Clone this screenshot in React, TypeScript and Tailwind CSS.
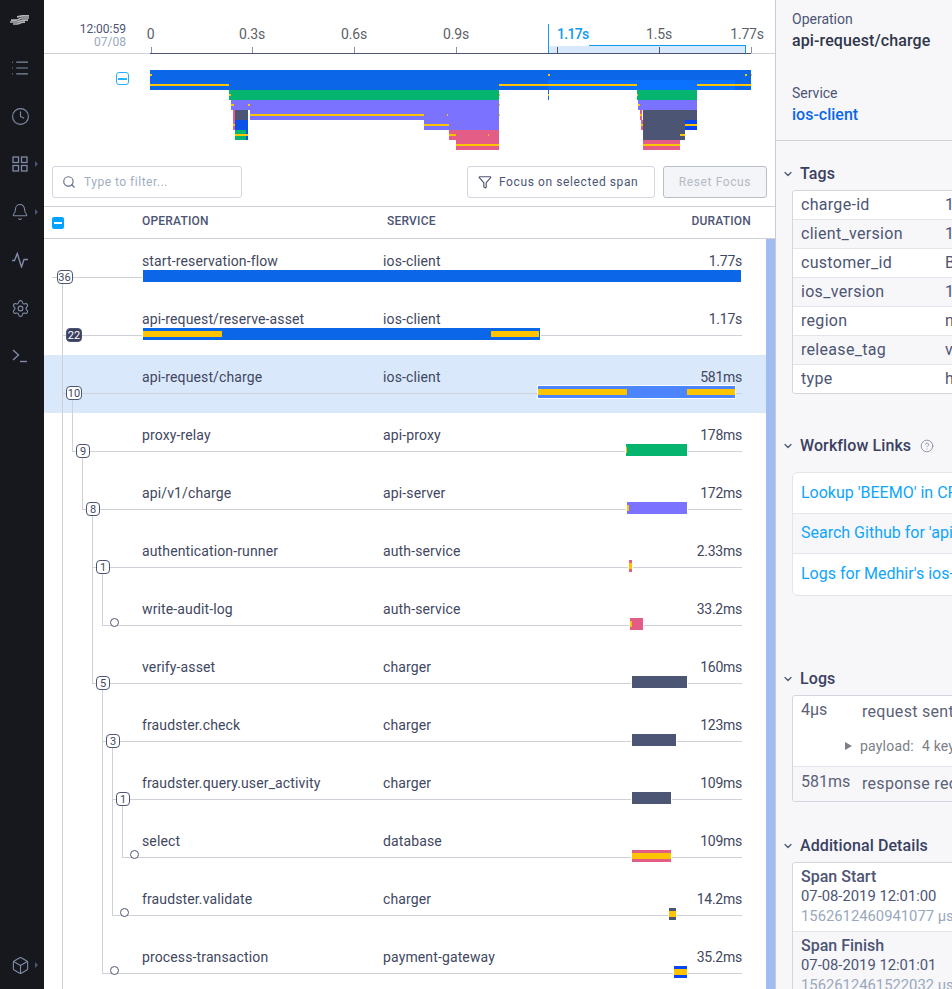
import React from "react";
import { Bell, Box, Clock, Filter, List, Search, Settings, ChevronDown, CircleHelp } from "lucide-react";

const BLUE = "#0b67e8";
const YELLOW = "#ffc400";
const GREEN = "#05b56f";
const PURPLE = "#7b73ff";
const PINK = "#e35d86";
const SLATE = "#4d5574";

type SPAN = {
  name: string;
  service: string;
  duration: string;
  badge?: string;
  nodeX: number;
  nodeW?: number;
  lineFrom: number;
  bar: [number, number];
  color: string;
  marks?: [number, number][];
  dark?: boolean;
  selected?: boolean;
};

const SPANS: SPAN[] = [
  { name: "start-reservation-flow", service: "ios-client", duration: "1.77s", badge: "36", nodeX: 56.5, nodeW: 16, lineFrom: 52, bar: [143, 741], color: BLUE },
  { name: "api-request/reserve-asset", service: "ios-client", duration: "1.17s", badge: "22", nodeX: 66, nodeW: 16, lineFrom: 62, bar: [143, 540], color: BLUE, marks: [[143, 222], [491, 539]], dark: true },
  { name: "api-request/charge", service: "ios-client", duration: "581ms", badge: "10", nodeX: 66, nodeW: 16, lineFrom: 62, bar: [538, 735], color: "#4d85ff", marks: [[538, 627], [687, 735]], selected: true },
  { name: "proxy-relay", service: "api-proxy", duration: "178ms", badge: "9", nodeX: 76, lineFrom: 72, bar: [626, 687], color: GREEN, marks: [[626, 627]] },
  { name: "api/v1/charge", service: "api-server", duration: "172ms", badge: "8", nodeX: 86, lineFrom: 82, bar: [627, 687], color: PURPLE, marks: [[627, 629]] },
  { name: "authentication-runner", service: "auth-service", duration: "2.33ms", badge: "1", nodeX: 96, lineFrom: 92, bar: [629, 632], color: PINK, marks: [[629, 632]] },
  { name: "write-audit-log", service: "auth-service", duration: "33.2ms", nodeX: 110, lineFrom: 102, bar: [630, 643], color: PINK, marks: [[630, 632]] },
  { name: "verify-asset", service: "charger", duration: "160ms", badge: "5", nodeX: 96, lineFrom: 92, bar: [632, 687], color: SLATE },
  { name: "fraudster.check", service: "charger", duration: "123ms", badge: "3", nodeX: 106, lineFrom: 102, bar: [632, 676], color: SLATE },
  { name: "fraudster.query.user_activity", service: "charger", duration: "109ms", badge: "1", nodeX: 116, lineFrom: 112, bar: [632, 671], color: SLATE },
  { name: "select", service: "database", duration: "109ms", nodeX: 130, lineFrom: 122, bar: [632, 671], color: PINK, marks: [[632, 671]] },
  { name: "fraudster.validate", service: "charger", duration: "14.2ms", nodeX: 120, lineFrom: 112, bar: [669, 676], color: SLATE, marks: [[669, 676]] },
  { name: "process-transaction", service: "payment-gateway", duration: "35.2ms", nodeX: 110, lineFrom: 102, bar: [674, 687], color: "#0847f0", marks: [[674, 687]] },
];

// page coords, x / top / bottom
const TREE_LINES = [
  [62, 284, 989],
  [72, 400, 451],
  [82, 458, 509],
  [92, 516, 683],
  [102, 574, 625],
  [102, 690, 973],
  [112, 748, 915],
  [122, 806, 857],
];

// flame chart: x1, x2, y, h, colour
const FLAME: [number, number, number, number, string][] = [
  [150, 751, 70, 20, "#0b67e8"],
  [548, 735, 80, 10, "#0b72ff"],
  [229, 499, 90, 10, GREEN],
  [637, 697, 90, 10, GREEN],
  [231, 499, 100, 10, PURPLE],
  [638, 697, 100, 10, PURPLE],
  [250, 499, 110, 10, PURPLE],
  [424, 499, 120, 10, PURPLE],
  [233, 235, 110, 20, PINK],
  [235, 248, 110, 10, SLATE],
  [235, 248, 120, 10, "#0b50e8"],
  [235, 246, 130, 10, GREEN],
  [246, 248, 130, 10, "#0b50e8"],
  [449, 499, 130, 10, PINK],
  [456, 499, 140, 10, PINK],
  [640, 642, 110, 10, PINK],
  [641, 643, 120, 10, PINK],
  [643, 697, 110, 10, SLATE],
  [643, 685, 120, 10, SLATE],
  [685, 697, 120, 10, "#0847f0"],
  [643, 685, 130, 10, SLATE],
  [643, 680, 140, 10, PINK],
  [548, 549, 90, 10, "#0b67e8"],
  // yellow log marks
  [150, 152, 74, 2, YELLOW],
  [548, 550, 74, 2, YELLOW],
  [745, 747, 74, 2, YELLOW],
  [751, 752, 74, 2, YELLOW],
  [150, 229, 84, 2, YELLOW],
  [499, 637, 84, 2, YELLOW],
  [697, 751, 84, 2, YELLOW],
  [229, 231, 94, 2, YELLOW],
  [499, 500, 94, 2, YELLOW],
  [548, 549, 94, 2, YELLOW],
  [637, 638, 94, 2, YELLOW],
  [231, 234, 104, 2, YELLOW],
  [248, 250, 104, 2, YELLOW],
  [499, 500, 104, 2, YELLOW],
  [638, 640, 104, 2, YELLOW],
  [250, 424, 114, 2, YELLOW],
  [447, 448, 114, 2, YELLOW],
  [499, 500, 114, 2, YELLOW],
  [640, 642, 114, 2, YELLOW],
  [233, 235, 124, 2, YELLOW],
  [424, 449, 124, 2, YELLOW],
  [641, 643, 124, 2, YELLOW],
  [685, 697, 124, 2, YELLOW],
  [235, 248, 134, 2, YELLOW],
  [449, 456, 134, 2, YELLOW],
  [488, 489, 134, 2, YELLOW],
  [680, 685, 134, 2, YELLOW],
  [456, 499, 144, 2, YELLOW],
  [643, 680, 144, 2, YELLOW],
];

const TICKS = [
  { label: "0", x: 150.5, tick: 150.5 },
  { label: "0.3s", x: 252, tick: 252 },
  { label: "0.6s", x: 354, tick: 354 },
  { label: "0.9s", x: 456, tick: 456 },
  { label: "1.5s", x: 659, tick: 659 },
  { label: "1.77s", x: 747, tick: 751 },
];

const TAGS = [
  ["charge-id", "14c9"],
  ["client_version", "1.2"],
  ["customer_id", "BEEMO"],
  ["ios_version", "11.4"],
  ["region", "north"],
  ["release_tag", "v1"],
  ["type", "http"],
];

const LINKS = ["Lookup 'BEEMO' in CRM", "Search Github for 'api-request'", "Logs for Medhir's ios-client"];

function SideIcon({ children, caret }: { children: React.ReactNode; caret?: boolean }) {
  return (
    <div className="relative flex h-12 w-11 items-center justify-center pr-1 text-[#7f8ba5]">
      {children}
      {caret && <span className="absolute left-[35px] top-[21px] h-0 w-0 border-y-[3px] border-l-[3px] border-y-transparent border-l-[#4d5574]" />}
    </div>
  );
}

function Sidebar() {
  return (
    <div className="flex h-full w-11 shrink-0 flex-col items-center bg-[#17181e]">
      <div className="mb-1 flex h-10 items-center pr-1">
        <svg width="20" height="10" viewBox="0 0 20 10" fill="none" stroke="#b4b4b6" strokeWidth="1.7">
          <path d="M7 1.800c3 0 3-1 6-1h6" />
          <path d="M1 5.200h5c3 0 3-2.200 6-2.200h7" />
          <path d="M0 7h7c3 0 3-1.800 6-1.800h5" />
          <path d="M3 9h4c3 0 3-1.800 6-1.800h2" />
        </svg>
      </div>
      <SideIcon><List size={20} strokeWidth={1.4} /></SideIcon>
      <SideIcon><Clock size={19} strokeWidth={1.4} /></SideIcon>
      <SideIcon caret>
        <svg width="16" height="16" viewBox="0 0 16 16" fill="none" stroke="currentColor" strokeWidth="1.3">
          <rect x="1" y="1" width="5.500" height="5.500" />
          <rect x="9.500" y="1" width="5.500" height="5.500" />
          <rect x="1" y="9.500" width="5.500" height="5.500" />
          <rect x="9.500" y="9.500" width="5.500" height="5.500" />
        </svg>
      </SideIcon>
      <SideIcon caret><Bell size={18} strokeWidth={1.4} /></SideIcon>
      <SideIcon>
        <svg width="18" height="16" viewBox="0 0 18 16" fill="none" stroke="currentColor" strokeWidth="1.4">
          <path d="M1 8.500h2.500L6.300 1.500 10.500 15 13 7.500h4" />
        </svg>
      </SideIcon>
      <SideIcon><Settings size={19} strokeWidth={1.4} /></SideIcon>
      <SideIcon>
        <svg width="16" height="14" viewBox="0 0 16 14" fill="none" stroke="currentColor" strokeWidth="1.4">
          <path d="M1 1l5.500 5L1 11" />
          <path d="M8 12.500h7" />
        </svg>
      </SideIcon>
      <div className="mt-auto">
        <SideIcon caret><Box size={19} strokeWidth={1.4} /></SideIcon>
      </div>
    </div>
  );
}

function Ruler() {
  return (
    <div className="relative h-[54px] shrink-0 border-b border-[#cfd0d8]">
      <div className="absolute right-[649px] top-[23px] text-right text-[12px] leading-[12.500px] text-[#4d5574]">
        12:00:59
        <div className="text-[#9aa8bd]">07/08</div>
      </div>
      {TICKS.map((t) => (
        <div key={t.label}>
          <div className="absolute top-[25px] -translate-x-1/2 text-[14px] leading-[18px] tracking-[-0.2px] text-[#5b5f68]" style={{ left: t.x - 44 }}>
            {t.label}
          </div>
          <div className="absolute top-[47px] h-[6px] w-px bg-[#8d93a6]" style={{ left: t.tick - 44 }} />
        </div>
      ))}
      <div className="absolute left-[106px] right-[24px] top-[53px] h-px bg-[#4d5574]" />
      {/* selected window */}
      <div className="absolute left-[504px] top-[46px] h-[7px] w-[197px] bg-[#d9e8fb]" />
      <div className="absolute left-[513px] top-[47px] h-[6px] w-px bg-[#4d5574]" />
      <div className="absolute left-[615px] top-[47px] h-[6px] w-px bg-[#4d5574]" />
      <div className="absolute left-[504px] top-[24px] h-[29px] w-px bg-[#109cf1]" />
      <div className="absolute left-[701px] top-[45px] h-[8px] w-px bg-[#109cf1]" />
      <div className="absolute left-[545px] top-[45px] h-px w-[156px] bg-[#109cf1]" />
      <div className="absolute left-[513px] top-[25px] text-[14px] font-medium leading-[18px] tracking-[-0.7px] text-[#109cf1]">1.17s</div>
    </div>
  );
}

function FlameChart() {
  return (
    <div className="relative h-[112px] shrink-0">
      <svg width="731" height="96" viewBox="44 54 731 96" className="block" shapeRendering="crispEdges">
        {FLAME.map(([x1, x2, y, h, c], i) => (
          <rect key={i} x={x1} y={y} width={x2 - x1} height={h} fill={c} />
        ))}
      </svg>
      <div className="absolute left-[72px] top-[18px] flex h-[13px] w-[13px] items-center justify-center rounded-[3px] border border-[#29b1ff] bg-white">
        <span className="h-[2px] w-[9px] bg-[#29b1ff]" />
      </div>
    </div>
  );
}

function FilterBar() {
  return (
    <div className="flex h-[41px] shrink-0 items-start justify-between border-b border-[#cfd0d8] pl-2 pr-2">
      <div className="flex h-8 w-[190px] items-center gap-2 rounded-[3px] border border-[#d3d6df] px-[9px]">
        <Search size={14} strokeWidth={2} className="text-[#66708a]" />
        <span className="text-[12px] tracking-[0.5px] text-[#a0aec0]">Type to filter...</span>
      </div>
      <div className="flex gap-2">
        <div className="flex h-8 w-[188px] items-center gap-[7px] rounded-[3px] border border-[#d3d6df] pl-[10px]">
          <Filter size={14} strokeWidth={2} className="text-[#4d5574]" />
          <span className="text-[12px] tracking-[0.6px] text-[#4d5574]">Focus on selected span</span>
        </div>
        <div className="flex h-8 w-[104px] items-center justify-center rounded-[3px] border border-[#b9bec9] bg-[#f4f5f8]">
          <span className="text-[12px] tracking-[0.6px] text-[#b4bac6]">Reset Focus</span>
        </div>
      </div>
    </div>
  );
}

function TableHead() {
  return (
    <div className="relative flex h-8 shrink-0 items-center border-b border-[#cfd0d8] pb-[3px] text-[12px] font-medium tracking-[0.2px] text-[#4d5574]">
      <div className="ml-2 mr-[78px] mt-[3px] flex h-3 w-3 items-center justify-center rounded-[2px] bg-[#00a3ff]">
        <span className="h-[2px] w-2 bg-white" />
      </div>
      <div className="w-[245px]">OPERATION</div>
      <div>SERVICE</div>
      <div className="ml-auto mr-6">DURATION</div>
    </div>
  );
}

function SpanRow({ span }: { span: SPAN }) {
  const w = span.nodeW ?? 14;
  return (
    <div className={`relative h-[58px] ${span.selected ? "bg-[#dae8fb]" : ""}`}>
      <div className="absolute h-px bg-[#cfd0d8]" style={{ left: span.lineFrom - 44, width: 742 - span.lineFrom, top: 38 }} />
      <div className="relative flex items-start pl-[98px] pt-[12px] text-[14px] leading-5 tracking-[0.13px] text-[#3f4761]">
        <div className="w-[241px] truncate">{span.name}</div>
        <div>{span.service}</div>
        <div className="absolute left-[590px] w-[108px] text-right tracking-[-0.25px]">{span.duration}</div>
      </div>
      <div
        className="absolute top-[31px] h-3 shadow-[0_0_0_1px_#ffffff]"
        style={{ left: span.bar[0] - 44, width: span.bar[1] - span.bar[0], backgroundColor: span.color }}
      >
        {span.marks?.map((m) => (
          <div key={m[0]} className="absolute top-[3px] h-[6px] bg-[#ffc400]" style={{ left: m[0] - span.bar[0], width: m[1] - m[0] }} />
        ))}
      </div>
      {span.badge ? (
        <div
          className={`absolute top-[31px] flex h-[14px] items-center justify-center rounded-[4px] border border-[#4d5574] pt-px text-[11px] leading-none ${span.dark ? "bg-[#3a4160] text-white" : "bg-white text-[#3f4761]"}`}
          style={{ left: span.nodeX - 44, width: w }}
        >
          {span.badge}
        </div>
      ) : (
        <div className="absolute top-[31px] h-[9px] w-[9px] rounded-full border border-[#4d5574] bg-white" style={{ left: span.nodeX - 44 }} />
      )}
    </div>
  );
}

function SpanList() {
  return (
    <div className="flex min-h-0 flex-1">
      <div className="relative min-w-0 flex-1 overflow-hidden">
        {SPANS.map((s) => (
          <SpanRow key={s.name} span={s} />
        ))}
        {TREE_LINES.map(([x, y1, y2]) => (
          <div key={`${x}-${y1}`} className="absolute w-px bg-[#cfd0d8]" style={{ left: x - 44, top: y1 - 239, height: y2 - y1 }} />
        ))}
      </div>
      <div className="w-[9px] shrink-0 bg-[#9fbdf0]" />
    </div>
  );
}

function SectionTitle({ children }: { children: React.ReactNode }) {
  return (
    <div className="flex h-5 items-center text-[16px] font-medium tracking-[0.1px] text-[#3a4160]">
      <ChevronDown size={12} strokeWidth={2.5} className="ml-[6px] mr-[6px] text-[#4d5574]" />
      {children}
    </div>
  );
}

function DetailPanel() {
  return (
    <div className="h-full w-[177px] shrink-0 overflow-hidden border-l border-[#c9cad2] bg-[#f7f7fa] text-[#4d5574]">
      <div className="h-[141px] w-[176px] border-b border-[#cfd0d8] pl-4 pt-[9px]">
        <div className="text-[14px] leading-5">Operation</div>
        <div className="mt-px whitespace-nowrap text-[16px] font-medium leading-[22px] tracking-[0.1px] text-[#2f3649]">api-request/charge</div>
        <div className="mt-[31px] text-[14px] leading-5">Service</div>
        <div className="mt-px text-[16px] font-medium leading-[22px] text-[#0b67e8]">ios-client</div>
      </div>

      <div className="mt-[23px]">
        <SectionTitle>Tags</SectionTitle>
      </div>
      <div className="ml-4 mt-[6px] w-[200px] overflow-hidden rounded-[3px] border border-[#d3d6df] bg-white">
        {TAGS.map(([k, v], i) => (
          <div key={k} className={`flex items-center whitespace-nowrap border-[#e4e5ea] pl-2 text-[16px] tracking-[0.3px] ${i % 2 ? "bg-[#f7f7fa]" : ""} ${i < TAGS.length - 1 ? "h-[29px] border-b" : "h-[28px]"}`}>
            <span className="w-[144px] shrink-0">{k}</span>
            <span>{v}</span>
          </div>
        ))}
      </div>

      <div className="mt-[42px]">
        <SectionTitle>
          Workflow Links
          <CircleHelp size={14} strokeWidth={1.6} className="ml-[9px] text-[#8d93a6]" />
        </SectionTitle>
      </div>
      <div className="ml-4 mt-4 w-[200px] overflow-hidden rounded-[6px] border border-[#e4e5ea] bg-white">
        {LINKS.map((l, i) => (
          <div key={l} className={`flex h-[40.500px] items-center whitespace-nowrap border-[#e4e5ea] pl-2 text-[16px] text-[#0ea5ff] ${i === 1 ? "bg-[#f7f7fa]" : ""} ${i < 2 ? "border-b" : ""}`}>
            {l}
          </div>
        ))}
      </div>

      <div className="mt-[73px]">
        <SectionTitle>Logs</SectionTitle>
      </div>
      <div className="ml-4 mt-[6px] h-[107px] w-[200px] overflow-hidden rounded-[3px] border border-[#d3d6df] bg-white">
        <div className="h-[71px] whitespace-nowrap border-b border-[#e4e5ea] pl-2 pt-1 text-[#5b6278]">
          <div className="flex text-[16px] leading-5">
            <span className="w-[61px]">4µs</span>
            <span className="mt-[2px] tracking-[0.3px]">request sent</span>
          </div>
          <div className="ml-[44px] mt-[14px] flex items-center text-[14px] leading-5 tracking-[0.2px] text-[#7b7f88]">
            <span className="mr-[8px] h-0 w-0 border-y-[4px] border-l-[7px] border-y-transparent border-l-[#7b7f88]" />
            payload:
            <span className="ml-2">4 keys</span>
          </div>
        </div>
        <div className="flex h-[34px] items-center whitespace-nowrap bg-[#f7f7fa] pl-2 text-[16px] text-[#5b6278]">
          <span className="-mt-[3px] w-[61px] shrink-0">581ms</span>
          <span className="tracking-[0.3px]">response received</span>
        </div>
      </div>

      <div className="mt-[34px]">
        <SectionTitle>Additional Details</SectionTitle>
      </div>
      <div className="ml-4 mt-[6px] w-[200px] whitespace-nowrap rounded-[3px] border border-[#d3d6df] bg-white text-[14.800px] leading-[19.500px]">
        <div className="h-[69px] border-b border-[#e4e5ea] pl-2 pt-1">
          <div className="text-[16px] font-medium">Span Start</div>
          <div className="mt-px">07-08-2019 12:01:00</div>
          <div className="text-[#9aa8bd]">1562612460941077 µs</div>
        </div>
        <div className="h-[69px] bg-[#f7f7fa] pl-2 pt-1">
          <div className="text-[16px] font-medium">Span Finish</div>
          <div className="mt-px">07-08-2019 12:01:01</div>
          <div className="text-[#9aa8bd]">1562612461522032 µs</div>
        </div>
      </div>
    </div>
  );
}

export default function App() {
  return (
    <div className="flex h-[989px] w-[952px] overflow-hidden bg-white font-['Roboto',sans-serif]">
      <Sidebar />
      <div className="flex min-w-0 flex-1 flex-col">
        <Ruler />
        <FlameChart />
        <FilterBar />
        <TableHead />
        <SpanList />
      </div>
      <DetailPanel />
    </div>
  );
}
